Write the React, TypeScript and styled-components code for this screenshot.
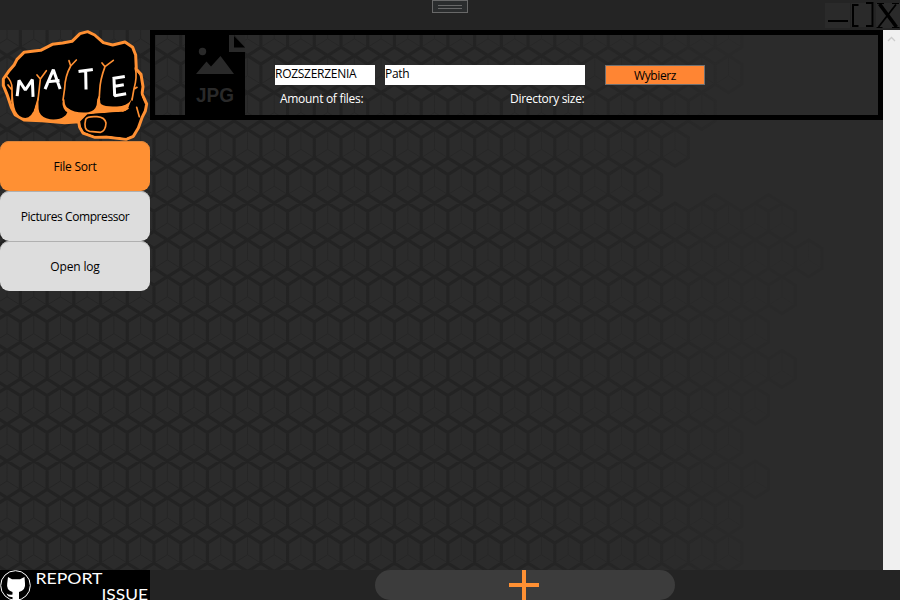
import React from "react";
import styled, { createGlobalStyle } from "styled-components";

const Global = createGlobalStyle`
  html, body { margin: 0; padding: 0; overflow: hidden; background: #242424; }
  * { box-sizing: border-box; }
  button, input { font: inherit; letter-spacing: inherit; margin: 0; outline: none; }
`;

const Window = styled.div`
  width: 900px;
  height: 600px;
  display: grid;
  grid-template-rows: 30px 540px 30px;
  background: #242424;
  font-family: "Open Sans", "Noto Sans", sans-serif;
  font-size: 12px;
  letter-spacing: -0.28px;
  color: #000;
`;

const TitleBar = styled.header`
  display: grid;
  grid-template-columns: 1fr 36px 1fr;
  align-items: start;
`;

const Grip = styled.div`
  grid-column: 2;
  height: 13px;
  border: 1px solid #686868;
  background: #2b2d2e;
  display: flex;
  flex-direction: column;
  align-items: center;
  justify-content: center;
  gap: 2px;
`;

const GripLine = styled.span`
  width: 24px;
  height: 1px;
  background: #686868;
`;

const Controls = styled.svg`
  display: block;
  justify-self: end;
  width: 75px;
  height: 30px;
`;

const Body = styled.div`
  display: grid;
  grid-template-columns: 150px 733px 17px;
  position: relative;
  background: #2b2b2b;
`;

const Pattern = styled.svg`
  position: absolute;
  inset: 0;
  width: 900px;
  height: 540px;
`;

const Sidebar = styled.nav`
  position: relative;
  display: flex;
  flex-direction: column;
`;

const Logo = styled.svg`
  display: block;
  width: 150px;
  height: 111px;
  flex: none;
`;

const NavButton = styled.button<{ $active?: boolean; $tracking?: number }>`
  height: 50px;
  border: 0;
  padding: 1px 0 0;
  border-radius: 9px;
  color: #000;
  letter-spacing: ${(p) => p.$tracking ?? -0.25}px;
  background: ${(p) => (p.$active ? "#ff9033" : "#dddddd")};
  box-shadow: inset 0 1px 0 ${(p) => (p.$active ? "#d8843c" : "#b0b0b0")};
`;

const Main = styled.main`
  position: relative;
`;

const SortCard = styled.section`
  height: 90px;
  border: 5px solid #000;
  padding-left: 30px;
  display: flex;
  gap: 30px;
`;

const FileIcon = styled.svg`
  display: block;
  width: 60px;
  height: 80px;
`;

const Fields = styled.div`
  padding-top: 30px;
`;

const FieldRow = styled.div`
  display: flex;
  height: 20px;
  gap: 10px;
`;

const Field = styled.input<{ $width: number }>`
  width: ${(p) => p.$width}px;
  height: 20px;
  border: 0;
  padding: 0 0 4px;
  background: #fff;
  color: #000;
`;

const PickButton = styled.button`
  width: 100px;
  height: 20px;
  margin-left: 10px;
  padding: 1px 0 0;
  line-height: 18px;
  letter-spacing: -0.4px;
  border: 1px solid #707070;
  background: #ff8533;
  color: #000;
`;

const Stats = styled.div`
  display: grid;
  grid-template-columns: 230px auto;
  padding: 5px 0 0 5px;
  line-height: 18px;
  letter-spacing: -0.3px;
  color: #fff;
`;

const ScrollBar = styled.div`
  position: relative;
  background: #f0f0f0;
  display: flex;
  justify-content: center;
  padding-top: 6px;
`;

const Footer = styled.footer`
  display: grid;
  grid-template-columns: 150px 225px 300px;
`;

const Report = styled.svg`
  display: block;
  width: 150px;
  height: 30px;
  background: #000;
  overflow: visible;
`;

const AddButton = styled.button`
  grid-column: 3;
  height: 30px;
  padding: 0 2px 0 0;
  border: 0;
  border-radius: 15px;
  background: #3c3c3c;
  display: flex;
  justify-content: center;
`;

const STEP_X = 26.72;
const STEP_Y = 36.85;
const HALF = STEP_X / 2;
const RIGHT_EDGES = [
  745, 745, 745, 715, 689, 662, 796, 823, 796, 769, 796, 769, 742, 769, 742, 742,
];

function cubePaths() {
  const outer: string[] = [];
  const inner: string[] = [];
  RIGHT_EDGES.forEach((edge, row) => {
    const y = -11.2 + (row - 1) * STEP_Y;
    for (let cx = -19.7; cx + HALF < edge + 5; cx += STEP_X) {
      outer.push(
        `M${cx} ${y}l${HALF} 8.4v20l${-HALF} 8.45l${-HALF} -8.45v-20z`
      );
      inner.push(`M${cx} ${y}v20m${-HALF} 8.4l${HALF} -8.4l${HALF} 8.4`);
    }
  });
  [715, 768.5].forEach((x) => outer.push(`M${x - HALF} 173l${HALF} -8.4l${HALF} 8.4`));
  return { outer: outer.join(""), inner: inner.join("") };
}

const cubes = cubePaths();

function CubePattern() {
  return (
    <Pattern viewBox="0 0 900 540" fill="none">
      <defs>
        <linearGradient id="fade" gradientUnits="userSpaceOnUse" x1="0" y1="0" x2="840" y2="0">
          <stop offset="0" stopColor="#222222" />
          <stop offset=".55" stopColor="#232323" />
          <stop offset=".78" stopColor="#262626" />
          <stop offset=".86" stopColor="#292929" />
          <stop offset="1" stopColor="#292929" />
        </linearGradient>
        <linearGradient id="fadeThin" gradientUnits="userSpaceOnUse" x1="0" y1="0" x2="840" y2="0">
          <stop offset="0" stopColor="#242424" />
          <stop offset=".7" stopColor="#272727" />
          <stop offset="1" stopColor="#2a2a2a" />
        </linearGradient>
      </defs>
      <path d={cubes.inner} stroke="url(#fadeThin)" strokeWidth="1" />
      <path d={cubes.outer} stroke="url(#fade)" strokeWidth="3.2" />
    </Pattern>
  );
}

function FistLogo() {
  return (
    <Logo viewBox="0 15 450 333" role="img" aria-label="Mate">
      <path
        d="M10 162L26 139L43 119L51 103L72 82L122 76L157 58L188 54L216 49L240 26L263 20L284 30L310 53L338 60L375 51L398 67L407 90L409 133L423 148L429 185L426 207L440 237L436 258L426 278L415 309L400 334L378 343L319 336L285 337L249 324L239 307L236 290L195 293L125 287L72 285L45 269L34 247L21 208L10 181Z"
        fill="#000"
        stroke="#ff9033"
        strokeWidth="9"
        strokeLinejoin="round"
      />
      <path
        d="M36 200L34 247L45 269L72 285L125 289L195 293L238 292L262 268L351 262Q382 262 386 248L400 215L380 225L310 225L298 210L285 235L205 235L190 220L180 260L130 260L114 215L100 260L60 265Z"
        fill="#ff9033"
      />
      <path
        d="M38 180Q38 236 47 258Q58 279 76 279Q96 278 103 250Q112 215 118 180Z
           M119 190Q112 245 118 262Q126 279 150 283Q180 285 190 276Q200 271 202 262Q187 252 187 230L192 190Z
           M197 190Q188 240 202 248Q225 266 265 262Q285 258 290 240L295 190Z
           M304 190Q296 232 304 238Q320 248 365 243Q390 237 395 220L402 180Z
           M245 298Q250 268 285 266L350 261Q383 262 385 248L404 200L420 200L432 237L428 258L418 278L408 306L396 328L378 338L319 331L285 332L253 320L244 305Z"
        fill="#000"
      />
      <g fill="none" stroke="#ff9033" strokeWidth="5" strokeLinejoin="round" strokeLinecap="round">
        <path d="M19 153Q36 168 36 190L36 230M24 180L34 193" />
        <path d="M111 150L121 162L139 137M121 162Q118 190 114 225" />
        <path d="M207 107L212 123L229 105M212 123Q195 154 194 190L189 225" />
        <path d="M306 114L315 125L340 106M315 125Q300 165 299 198L297 230" />
        <path d="M406 129Q412 157 402 191L396 225M404 191L411 187M384 250L368 258" />
        <path d="M410 247Q415 265 418 275M413 139L424 154" />
        <path d="M257 283Q262 273 291 275Q315 277 318 294Q317 317 302 322L269 319Q249 316 257 283Z" />
      </g>
      <g fill="none" stroke="#fff" strokeWidth="9" strokeLinecap="square" strokeLinejoin="bevel">
        <path d="M52 209L57 166L76 195L97 164L99 211" />
        <path d="M137 188L160 134L179 188M146 170L174 167" />
        <path d="M240 139L274 134M257 138L258 189" />
        <path d="M342 162L344 212L374 207M342 160L370 155M345 184L367 180" />
      </g>
    </Logo>
  );
}

function WindowControls() {
  return (
    <Controls viewBox="825 0 75 30">
      <path fill="#2a2a2a" d="M825 3h25v25h-25zM851 3h23v24h-23zM876 3h24v25h-24z" />
      <path fill="#000" d="M828 20h20v2h-20z" />
      <path fill="none" stroke="#000" strokeWidth="2" d="M858.500 5H853v21h5.500M866 3h6.500v23H866" />
      <path stroke="#000" strokeWidth="3.600" d="M879.500 4L896.500 27" />
      <path stroke="#000" strokeWidth="1.800" d="M896 4.500L878.500 27" />
      <path stroke="#000" strokeWidth="1" d="M877 3.500h7M892 3.500h7M876.500 27.500h6M892 27.500h7.500" />
    </Controls>
  );
}

function JpgIcon() {
  return (
    <FileIcon viewBox="0 0 60 80">
      <path fill="#000" d="M0 0h60v80H0z" />
      <path fill="#292929" d="M44 0h5l11 12.500V17H44z" />
      <path fill="#292929" d="M49 0h11v13z" />
      <path fill="#000" d="M49 1v11.500h11z" />
      <circle cx="17.500" cy="16.500" r="3.700" fill="#292929" />
      <path fill="#292929" d="M11 39l10.500-12.500 4.500 5L35.500 21 49 39z" />
      <text
        x="11"
        y="67"
        fill="#292929"
        fontFamily="Liberation Sans"
        fontWeight="700"
        fontSize="20"
        letterSpacing="0"
        textLength="38"
        lengthAdjust="spacingAndGlyphs"
      >
        JPG
      </text>
    </FileIcon>
  );
}

function ReportIssue() {
  return (
    <Report viewBox="0 0 150 30" fontFamily="Lato" fontSize="16" letterSpacing="0" fill="#fff">
      <circle cx="15.500" cy="15.500" r="14.800" fill="none" stroke="#fff" strokeWidth="1" />
      <path d="M8 7L12 9.200H20L24.500 7L25 13.500Q26 20 19 22V30H12.500V27Q8 27.500 6.500 23.500Q9.500 25.500 12.500 24.500V22Q6 20 7.200 13.500Z" />
      <text x="35.500" y="14" textLength="67" lengthAdjust="spacingAndGlyphs">REPORT</text>
      <text x="101.500" y="29.500" textLength="46.500" lengthAdjust="spacingAndGlyphs">ISSUE</text>
    </Report>
  );
}

export default function App() {
  return (
    <>
      <Global />
      <Window>
        <TitleBar>
          <Grip>
            <GripLine />
            <GripLine />
          </Grip>
          <WindowControls />
        </TitleBar>
        <Body>
          <CubePattern />
          <Sidebar>
            <FistLogo />
            <NavButton $active>File Sort</NavButton>
            <NavButton $tracking={-0.42}>Pictures Compressor</NavButton>
            <NavButton $tracking={-0.15}>Open log</NavButton>
          </Sidebar>
          <Main>
            <SortCard>
              <JpgIcon />
              <Fields>
                <FieldRow>
                  <Field $width={100} defaultValue="ROZSZERZENIA" />
                  <Field $width={200} defaultValue="Path" />
                  <PickButton>Wybierz</PickButton>
                </FieldRow>
                <Stats>
                  <span>Amount of files:</span>
                  <span>Directory size:</span>
                </Stats>
              </Fields>
            </SortCard>
          </Main>
          <ScrollBar>
            <svg width="9" height="6" viewBox="0 0 9 6" fill="none">
              <path d="M1 5L4.500 1.500L8 5" stroke="#cdcdcd" strokeWidth="1.300" />
            </svg>
          </ScrollBar>
        </Body>
        <Footer>
          <ReportIssue />
          <AddButton aria-label="Add">
            <svg width="30" height="30" viewBox="0 0 30 30">
              <path fill="#ff9033" d="M13 0h4v13h13v4H17v13h-4V17H0v-4h13z" />
            </svg>
          </AddButton>
        </Footer>
      </Window>
    </>
  );
}
